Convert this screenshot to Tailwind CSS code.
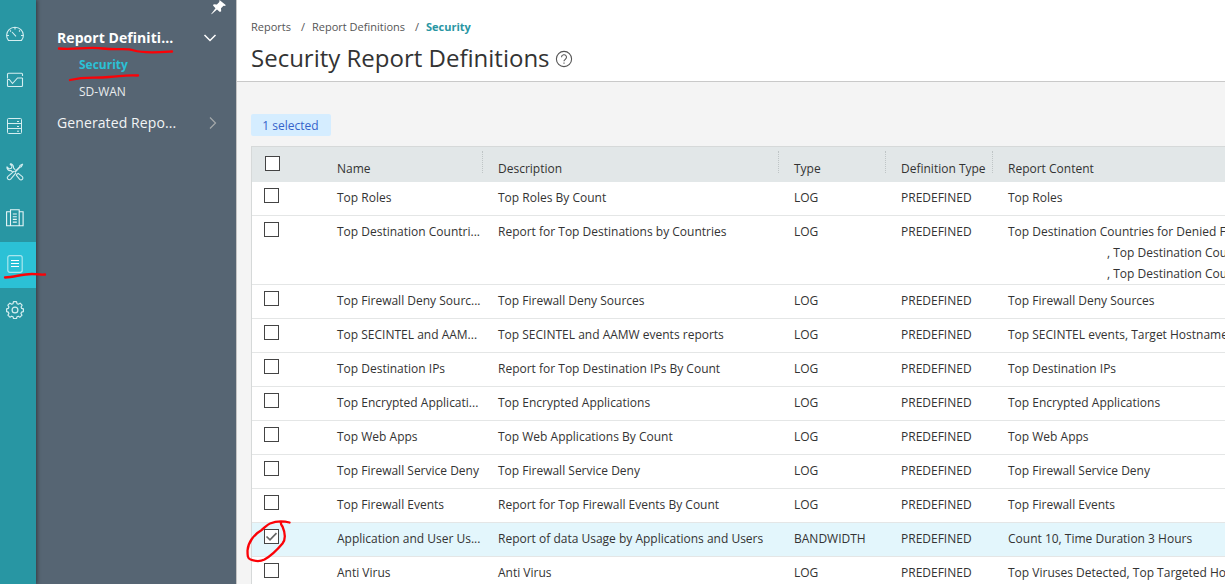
<!DOCTYPE html>
<html lang="en">
<head>
<meta charset="utf-8">
<title>Security Report Definitions</title>
<script src="https://cdn.jsdelivr.net/npm/@tailwindcss/browser@4"></script>
</head>
<body class="relative flex h-[584px] w-[1225px] overflow-hidden bg-[#f4f4f4] font-['Open_Sans','Noto_Sans',sans-serif] text-[#333]">

<!-- icon rail -->
<nav class="z-10 flex w-9 shrink-0 flex-col bg-[#2896a3] pt-3 text-[#d5eef0] shadow-[1px_0_4px_rgba(0,0,0,0.45)]">
  <a class="flex h-[46px] items-center pl-[6px]"><svg width="18" height="18" viewBox="0 0 18 18" fill="none" stroke="currentColor" stroke-width="1.1"><path d="M2.500 14.500C1 13 .6 11.300.6 9.300a8.400 8.100 0 0 1 16.800 0c0 2-.6 3.700-2 5.200zM6 6l4 4.300M9 1.500v2M3 9.500H1M17 9.500h-2M4 4.500l1 1M14 4.500l-1 1"/></svg></a>
  <a class="flex h-[46px] items-center pb-0.5 pl-[6px]"><svg width="18" height="18" viewBox="0 0 18 18" fill="none" stroke="currentColor" stroke-width="1.1"><path d="M1.500 7.500V3.300a1 1 0 0 1 1-1h13a1 1 0 0 1 1 1V5M1.500 8.500h1.800L6.500 12.500 11.500 7h5M1.500 8.500v6a1 1 0 0 0 1 1h13a1 1 0 0 0 1-1V7"/></svg></a>
  <a class="flex h-[46px] items-center pb-0.5 pl-[6px]"><svg width="18" height="18" viewBox="0 0 18 18" fill="none" stroke="currentColor" stroke-width="1"><path d="M2.500 1.500h12a1 1 0 0 1 1 1v13a1 1 0 0 1-1 1h-12a1 1 0 0 1-1-1v-13a1 1 0 0 1 1-1zM1.500 6.500h14M1.500 11.500h14M11 4.500h2M11 9.500h2M11 14.200h2"/></svg></a>
  <a class="flex h-[46px] items-center pb-0.5 pl-[6px]"><svg width="18" height="18" viewBox="0 0 18 18" fill="none" stroke="currentColor" stroke-width="1.1" stroke-linejoin="round"><path d="M16.800 1 14 2.500l-.4 1.300L8.600 9M16.800 1l-1.500 2.800-1.300.4-4.800 5M8.100 8.100 2 13.400a1.900 1.900 0 0 0 2.700 2.800L10 9.900M3.900 1 6 3.100 5.300 5.300 3.100 6 1 3.900C.6 5.700 2.200 8 4.900 7.500l1.800 1.700M3.900 1c2-.5 4 1.300 3.500 3.900l1.900 2M11 11l-.6 1.300 3.300 4a1.800 1.800 0 0 0 2.600-2.600l-4-3.300L11 11"/></svg></a>
  <a class="flex h-[46px] items-center pb-0.5 pl-[6px]"><svg width="18" height="18" viewBox="0 0 18 18" fill="none" stroke="#e8f6f7" stroke-width="1.1"><path d="M4.500.7h8.700v16.100H4.500zM4.500 2.800H.6v14h3.900M13.200 2.800h3.900v14h-3.900M6.800 5h4M6.800 7.700h4M6.800 10.400h4M6.800 13.100h4"/></svg></a>
  <a class="flex h-[46px] items-center bg-[#2bc1d6] pb-0.5 pl-[6px]"><svg width="18" height="18" viewBox="0 0 18 18" fill="none" stroke="#a9e6ee" stroke-width="1.2"><rect x="1.800" y=".7" width="14.400" height="16.600" rx="2"/><path stroke="#fff" d="M5 5.500h8M5 8.500h8M5 11.500h8"/></svg></a>
  <a class="flex h-[46px] items-center pb-0.5 pl-[6px]"><svg width="18" height="18" viewBox="0 0 18 18" fill="none" stroke="currentColor" stroke-width="1.2" stroke-linejoin="round"><circle cx="9" cy="9" r="2.900"/><path d="M7.500.7h3l.5 2 1.300.5 1.800-1 2 2-1 1.800.6 1.400 1.700.4v2.800l-1.800.5-.6 1.400 1 1.700-2 2-1.700-1-1.300.6-.5 1.700h-3l-.5-1.800-1.300-.5-1.800 1-2-2 1-1.800-.6-1.300-1.700-.5V7.800l1.800-.5.5-1.300-1-1.800 2-2 1.800 1L7 2.700z"/></svg></a>
</nav>

<!-- section menu -->
<aside class="relative flex w-[200px] shrink-0 flex-col bg-[#566573] pl-[21px] text-white">
  <svg class="absolute top-0 left-[175px]" width="16" height="15" viewBox="0 0 16 15" fill="#fff"><path d="M8.500 0 15 5.300 13.300 6l-.8-.3L10 8.200l.2 3.100-1.300.6-2.900-2.500L.6 14.300l-.4-.3 4.300-5.800L2 5.600l.7-1.300 3.200.1L8.300 2z"/></svg>
  <div class="mt-[26px] flex h-6 items-center justify-between pr-[19px] text-sm font-bold"><span class="tracking-[0.06px]">Report Definiti...</span><svg width="14" height="8" viewBox="0 0 14 8" fill="none" stroke="#fff" stroke-width="1.5"><path d="M1.500 1 7 6.500 12.500 1"/></svg></div>
  <div class="mt-1 h-6 pl-[22px] text-xs leading-[22px] font-bold text-[#2bc1d6]">Security</div>
  <div class="mt-[3px] h-6 pl-[22px] text-xs leading-[22px] text-[#e9ecee]">SD-WAN</div>
  <div class="mt-[6px] flex h-6 items-center justify-between pr-[19px] text-sm text-[#f2f4f5]"><span class="tracking-[0.1px]">Generated Repo...</span><svg width="8" height="14" viewBox="0 0 8 14" fill="none" stroke="#a5a9ab" stroke-width="1.2"><path d="M1 1.500 6.500 7 1 12.500"/></svg></div>
</aside>

<main class="flex w-[989px] shrink-0 flex-col border-l border-[#c4c4c4]">
  <header class="h-[82px] shrink-0 border-b border-[#c9c9c9] bg-white pl-[14px]">
    <div class="flex pt-[18px] text-[11px] leading-[18px] whitespace-nowrap text-[#555]"><span class="w-[50px]">Reports</span><span class="w-[11px]">/</span><span class="w-[103px]">Report Definitions</span><span class="w-[11px]">/</span><b class="text-[#2896a3]">Security</b></div>
    <div class="flex items-center gap-[5px] pt-1">
      <h1 class="text-2xl leading-9 whitespace-nowrap">Security Report Definitions</h1>
      <svg class="mt-0.5" width="18" height="18" viewBox="0 0 18 18" fill="none" stroke="#555" stroke-width="1.100"><circle cx="9" cy="9" r="7.600"/><path d="M6.500 7.200a2.500 2.500 0 1 1 3.700 2.200Q9 10 9 11.200M9 12.500v1.200"/></svg>
    </div>
  </header>
  <div class="mt-8 ml-[14px] flex h-[22px] w-20 shrink-0 items-center justify-center rounded-xs bg-[#d5edff] pt-0.5 pr-px text-xs text-[#3563ca]">1 selected</div>
  <section class="mt-[10px] ml-[14px] shrink-0 border-t border-l border-[#d6d9d9] bg-white text-xs">
    <div class="grid h-[35px] grid-cols-[69px_161px_296px_107px_107px_1fr] bg-[#e2e7e8] leading-[21px] whitespace-nowrap">
      <div class="pt-[9px] pl-[13px]"><div class="size-[15px] border border-[#444] bg-white"></div></div>
      <div class="pt-[11px] pl-4">Name</div>
      <div class="mt-1 h-[22px] border-l border-dotted border-[#bfc5c6] pt-[7px] pl-[15px]">Description</div>
      <div class="mt-1 h-[22px] border-l border-dotted border-[#bfc5c6] pt-[7px] pl-[15px]">Type</div>
      <div class="mt-1 h-[22px] border-l border-dotted border-[#bfc5c6] pt-[7px] pl-[15px]">Definition Type</div>
      <div class="mt-1 h-[22px] border-l border-dotted border-[#bfc5c6] pt-[7px] pl-[15px]">Report Content</div>
    </div>
    <div id="rows"></div>
  </section>
</main>

<!-- hand-drawn marks -->
<svg class="absolute inset-0 z-20" width="1225" height="584" fill="none" stroke="#fb0207" stroke-width="2.300" stroke-linecap="round" stroke-linejoin="round">
  <path d="M59 48.500C75 50 87 46.500 103 48.500S125 47.500 134 50.500s25 1.800 38 1"/>
  <path d="M70 80c17-4 22-1.500 39-3s16-2 29-1.500"/>
  <path d="M5 277.500c10-.5 17-3.500 27-3.500s6 1 13 .5"/>
  <path d="M289.500 522.500C284 521 276 521 270 523.500c-3 1-6 5-9 7-7 4-13 12-13.500 20 0 5 0 8 3 9 5 2 10 2 14 0 7-4 13-10 18-16 3-4 3-10 0-17-1-1.500-2-2-1.500-4.500"/>
</svg>

<script>
const rows = [
  ["Top Roles", "Top Roles By Count", "LOG", ["Top Roles"]],
  ["Top Destination Countri...", "Report for Top Destinations by Countries", "LOG", ["Top Destination Countries for Denied Flows", ", Top Destination Countries", ", Top Destination Countries"]],
  ["Top Firewall Deny Sourc...", "Top Firewall Deny Sources", "LOG", ["Top Firewall Deny Sources"]],
  ["Top SECINTEL and AAM...", "Top SECINTEL and AAMW events reports", "LOG", ["Top SECINTEL events, Target Hostnames"]],
  ["Top Destination IPs", "Report for Top Destination IPs By Count", "LOG", ["Top Destination IPs"]],
  ["Top Encrypted Applicati...", "Top Encrypted Applications", "LOG", ["Top Encrypted Applications"]],
  ["Top Web Apps", "Top Web Applications By Count", "LOG", ["Top Web Apps"]],
  ["Top Firewall Service Deny", "Top Firewall Service Deny", "LOG", ["Top Firewall Service Deny"]],
  ["Top Firewall Events", "Report for Top Firewall Events By Count", "LOG", ["Top Firewall Events"]],
  ["Application and User Us...", "Report of data Usage by Applications and Users", "BANDWIDTH", ["Count 10, Time Duration 3 Hours"], true],
  ["Anti Virus", "Anti Virus", "LOG", ["Top Viruses Detected, Top Targeted Hosts"]],
];
const check = '<svg width="13" height="13" viewBox="0 0 13 13" fill="none" stroke="#666" stroke-width="1.700"><path d="M1.500 6.500 5 9.800 11.500 3.200"/></svg>';
document.getElementById("rows").innerHTML = rows.map(([name, desc, type, content, on]) => `
  <div class="grid min-h-[34px] grid-cols-[69px_161px_296px_107px_107px_1fr] border-b border-[#e4e6e6] pt-[5px] leading-[21px] whitespace-nowrap ${on ? "bg-[#e3f6fc]" : "bg-white"}">
    <div class="pt-px pl-3"><div class="size-[15px] border border-[#444] bg-white">${on ? check : ""}</div></div>
    <div class="pl-4">${name}</div><div class="pl-4">${desc}</div><div class="pl-4">${type}</div><div class="pl-4">PREDEFINED</div>
    <div class="min-w-0 overflow-hidden pl-4">${content.map((t, i) => `<div class="${i ? "pl-[99px]" : ""}">${t}</div>`).join("")}</div>
  </div>`).join("");
</script>
</body>
</html>
